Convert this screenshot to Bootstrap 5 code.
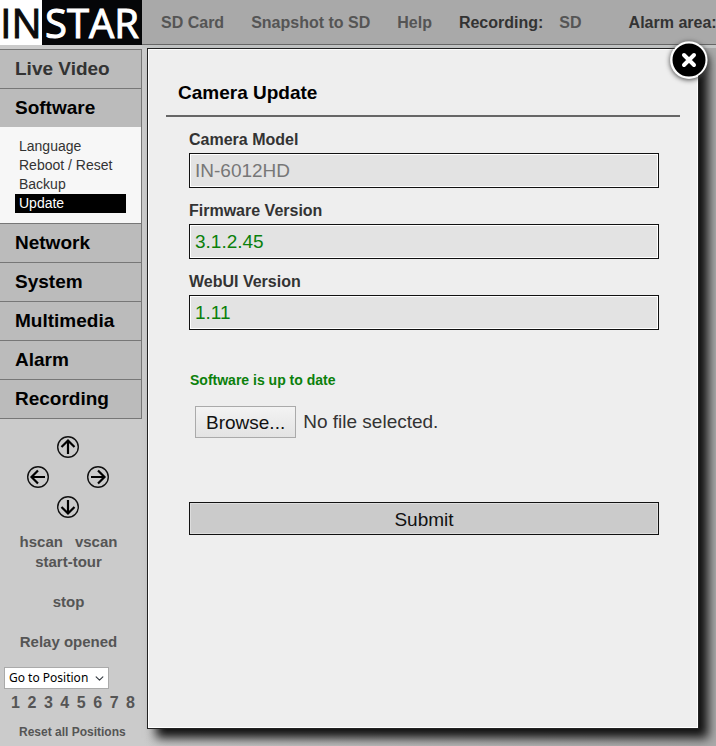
<!DOCTYPE html>
<html lang="en">
<head>
<meta charset="utf-8">
<meta name="viewport" content="width=device-width, initial-scale=1">
<title>INSTAR Camera Update</title>
<link rel="stylesheet" href="https://cdn.jsdelivr.net/npm/bootstrap@5.3.0/dist/css/bootstrap.min.css">
<style>
body{font-family:"Liberation Sans",Arial,sans-serif;background:#cbcbcb;color:#333}
a,button{text-decoration:none;color:inherit}
.topbar{height:45px;background:#a9a9a9;border-bottom:1px solid #666;font-size:16px;font-weight:700;color:#555;white-space:nowrap}
.topbar b{color:#333}
.brand{width:142px;height:45px;background:#050608;color:#fff;font:400 40px/45px "Open Sans",sans-serif;-webkit-text-stroke:1px currentColor}
.brand-in{width:42px;background:#fff;color:#0c0c0c}
.brand-star{width:100px}
.topbar .toplinks{padding:2px 0 0 19px;gap:27px}
.side{width:142px}
.menu{border:1px solid #777;border-left:0;background:#bbb;margin-top:4px}
.menu-link{display:block;height:39px;border-bottom:1px solid #777;padding-left:15px;font-size:19px;line-height:37px;font-weight:700;color:#000}
.menu-link.first{color:#333}
.menu-link.open{height:38px;border-bottom:0}
.menu-link.final{height:38px;border-bottom:0}
.submenu{background:#f7f7f7;border-bottom:1px solid #777;padding:10px 15px 10px 15px}
.submenu a{display:block;height:19px;padding-left:4px;font-size:14px;line-height:19px;color:#333}
.submenu a.current{background:#000;color:#fff}
.pad{display:grid;grid-template-columns:repeat(3,24px);grid-auto-rows:24px;gap:6px;justify-content:center;padding:16px 7px 0 0}
.pad button{width:24px;height:24px}
.plain{background:none;border:0;padding:0;font-weight:700;color:#555}
.moves{font-size:15px;line-height:20px;padding-right:5px;margin-top:13px}
.moves .plain{display:block;height:20px}
.goto{width:105px;height:22px;margin:15px 0 0 4px;padding:0 20px 0 4px;border:1px solid #aaa;border-radius:0;background-color:#fff;background-position:right 4px center;background-size:9px 9px;font:12px/18px "Noto Sans",sans-serif;color:#000}
.nums{font-size:16px;line-height:20px;padding:4px 7px 0 11px}
.resetall{font-size:12px;line-height:16px;margin:11px 0 0 19px}
.stage{background:linear-gradient(#c4c6c6,#c4c6c6) top/100% 3px no-repeat,linear-gradient(#aaa,#aaa) right/18px 100% no-repeat,linear-gradient(to right,#cbcbcb,#aaa);padding:4px 18px 18px 6px}
.panel{position:relative;background:#eee;border:1px solid #fff;outline:1px solid #222;box-shadow:9px 9px 10px 1px #111;min-height:679px;padding:28px 17px 0 17px}
.panel h1{font-size:19px;line-height:30px;font-weight:700;color:#000;margin:0;padding-left:12px}
.panel hr{margin:7px 0 13px;border-top:2px solid #666;opacity:1}
.fields{padding:0 21px 0 23px}
.fields .name{display:block;font-size:16px;line-height:20px;font-weight:700;margin-bottom:3px}
.box{display:block;width:100%;height:35px;border:1px solid #111;box-shadow:inset 0 0 0 1px #fff;background:#e3e3e3;padding:1px 5px 0;font-size:19px;color:#777;margin-bottom:13px}
.box.ok{color:#0b800b}
.status{font-size:14px;line-height:18px;font-weight:700;color:#0b800b;margin:41px 0 17px 1px}
.browse{height:32px;border:1px solid #aaa;background:linear-gradient(#f3f3f3,#e3e3e3);padding:0 10px;line-height:32px;color:#111;cursor:pointer}
.filepick{font-size:19px;line-height:32px;gap:7px;padding-left:6px}
.submit{width:100%;height:33px;border:1px solid #111;box-shadow:inset 0 0 0 1px #ddd;background:#cbcbcb;color:#111;font-size:19px;padding:3px 0 0;margin-top:64px}
.shut{position:absolute;top:-9px;right:-11px;width:38px;height:38px;padding:0;border:0;background:none}
.shut svg{border-radius:50%;box-shadow:0 1px 5px #444}
.shut svg,.pad svg{display:block;overflow:visible}
</style>
<script src="https://cdn.jsdelivr.net/npm/bootstrap@5.3.0/dist/js/bootstrap.bundle.min.js"></script>
</head>
<body class="min-vh-100 d-flex flex-column overflow-hidden">
<header class="topbar d-flex">
  <a href="#" class="brand d-flex flex-shrink-0"><span class="brand-in text-center">IN</span><span class="brand-star text-center">STAR</span></a>
  <nav class="toplinks d-flex align-items-center">
    <a href="#">SD Card</a><a href="#">Snapshot to SD</a><a href="#">Help</a>
    <span class="d-flex"><b>Recording:</b><a href="#" class="ms-3">SD</a></span>
    <b class="ms-3 ps-1">Alarm area:</b>
  </nav>
</header>
<div class="d-flex flex-grow-1">
  <aside class="side flex-shrink-0">
    <nav class="menu">
      <a href="#" class="menu-link first">Live Video</a>
      <a href="#" class="menu-link open">Software</a>
      <div class="submenu"><a href="#">Language</a><a href="#">Reboot / Reset</a><a href="#">Backup</a><a href="#" class="current">Update</a></div>
      <a href="#" class="menu-link">Network</a>
      <a href="#" class="menu-link">System</a>
      <a href="#" class="menu-link">Multimedia</a>
      <a href="#" class="menu-link">Alarm</a>
      <a href="#" class="menu-link final">Recording</a>
    </nav>
    <svg width="0" height="0" class="position-absolute" aria-hidden="true"><symbol id="arrow" viewBox="0 0 24 24"><circle cx="12" cy="12" r="10.3" fill="none" stroke="#111" stroke-width="1.4"/><path d="M12 19V6M5.500 12 12 5.500l6.500 6.500" fill="none" stroke="#000" stroke-width="2.200"/></symbol></svg>
    <div class="pad">
      <span></span><button class="plain" aria-label="Up"><svg width="24" height="24"><use href="#arrow"/></svg></button><span></span>
      <button class="plain" aria-label="Left"><svg width="24" height="24"><use href="#arrow" transform="rotate(-90 12 12)"/></svg></button><span></span>
      <button class="plain" aria-label="Right"><svg width="24" height="24"><use href="#arrow" transform="rotate(90 12 12)"/></svg></button>
      <span></span><button class="plain" aria-label="Down"><svg width="24" height="24"><use href="#arrow" transform="rotate(180 12 12)"/></svg></button><span></span>
    </div>
    <div class="moves d-flex flex-column align-items-center">
      <div class="d-flex gap-2"><button class="plain me-1">hscan</button><button class="plain">vscan</button></div>
      <button class="plain mb-3">start-tour</button>
      <button class="plain my-1">stop</button>
      <button class="plain mt-3">Relay opened</button>
    </div>
    <select class="goto form-select" aria-label="Go to Position"><option>Go to Position</option></select>
    <div class="nums d-flex justify-content-between"><button class="plain">1</button><button class="plain">2</button><button class="plain">3</button><button class="plain">4</button><button class="plain">5</button><button class="plain">6</button><button class="plain">7</button><button class="plain">8</button></div>
    <button class="plain resetall">Reset all Positions</button>
  </aside>
  <main class="stage flex-grow-1">
    <form class="panel" role="dialog" aria-labelledby="heading">
      <button type="button" class="shut" aria-label="Close"><svg width="38" height="38" viewBox="1 1 38 38"><circle cx="20" cy="20" r="17.500" fill="#000" stroke="#fff" stroke-width="2"/><path d="m15 15 10 10m0-10L15 25" stroke="#fff" stroke-width="4" stroke-linecap="round"/></svg></button>
      <h1 id="heading">Camera Update</h1>
      <hr>
      <div class="fields">
        <label class="name" for="model">Camera Model</label><input id="model" class="box" value="IN-6012HD" readonly>
        <label class="name" for="firmware">Firmware Version</label><input id="firmware" class="box ok" value="3.1.2.45" readonly>
        <label class="name" for="webui">WebUI Version</label><input id="webui" class="box ok" value="1.11" readonly>
        <p class="status">Software is up to date</p>
        <div class="filepick d-flex align-items-center"><input type="file" id="file" class="visually-hidden"><label for="file" class="browse">Browse...</label><span>No file selected.</span></div>
        <button type="submit" class="submit">Submit</button>
      </div>
    </form>
  </main>
</div>
</body>
</html>
